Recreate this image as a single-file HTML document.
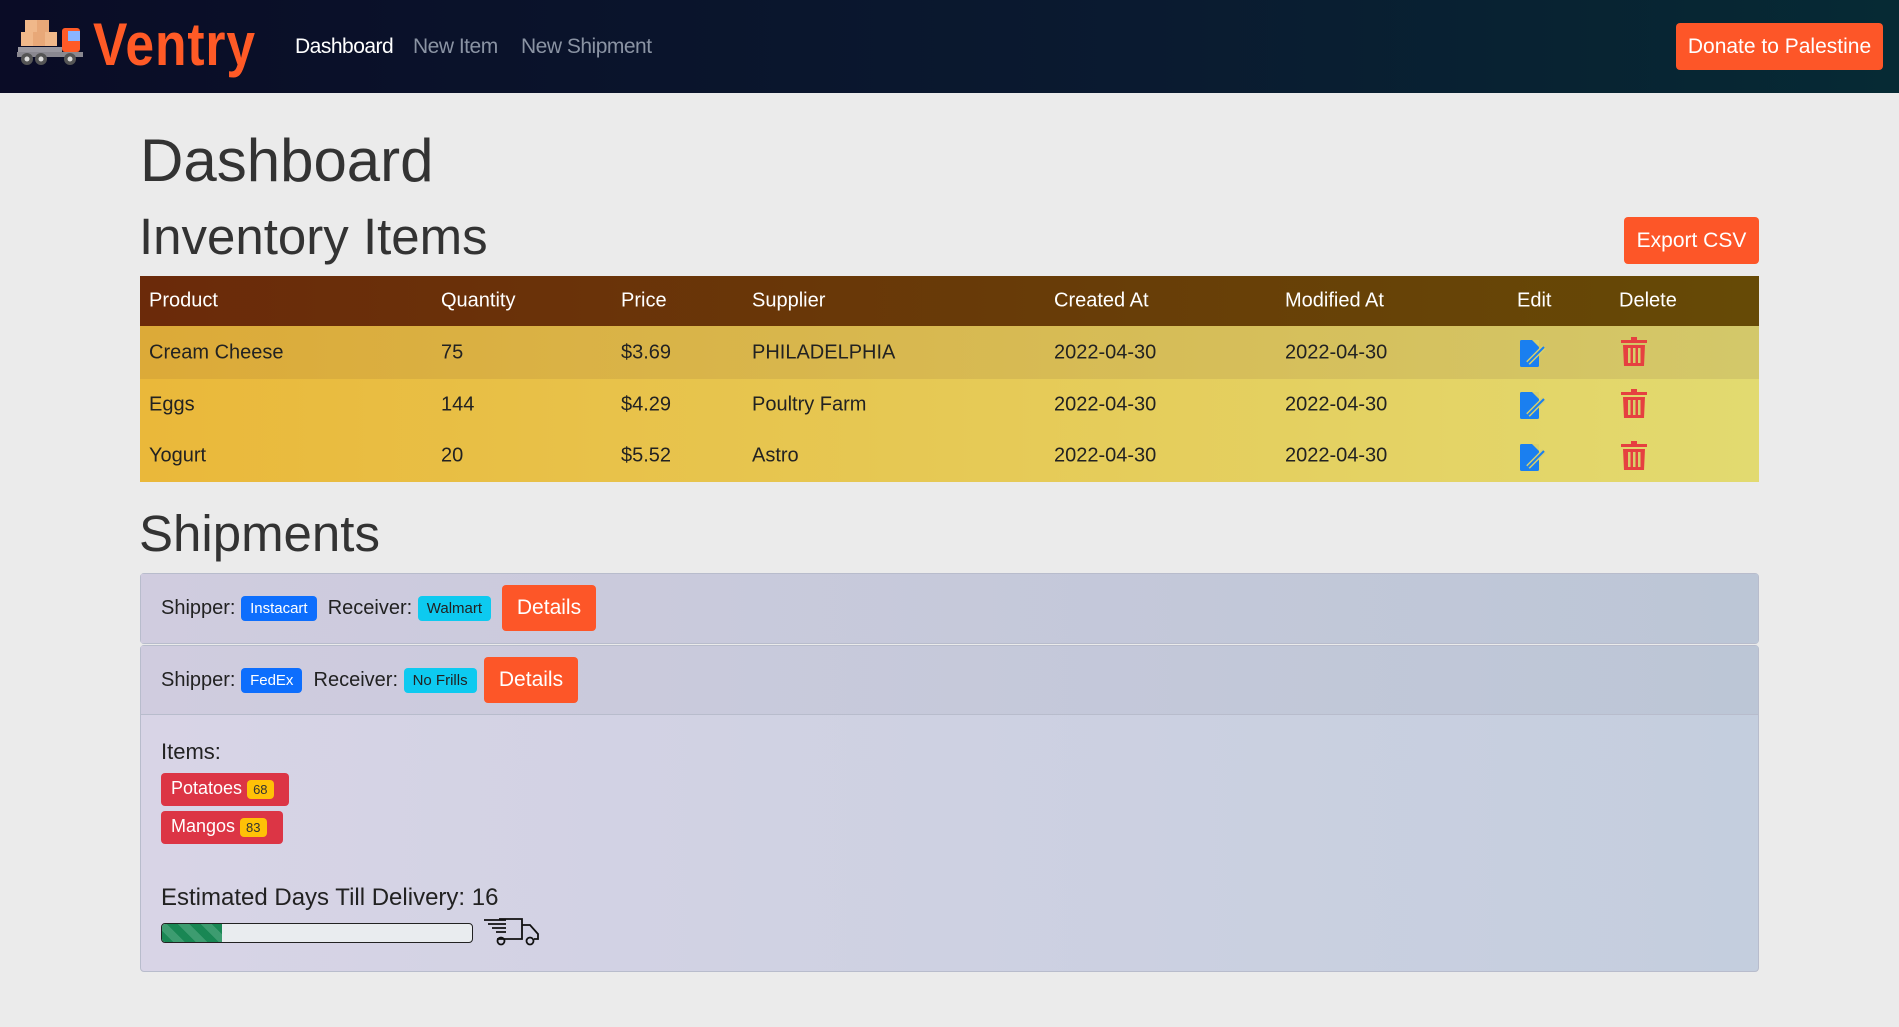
<!DOCTYPE html>
<html><head><meta charset="utf-8"><style>
*{box-sizing:border-box;margin:0;padding:0}
body{width:1899px;height:1027px;background:#ebebeb;font-family:"Liberation Sans",sans-serif;color:#222;position:relative;overflow:hidden}
.nav{position:absolute;left:0;top:0;width:1899px;height:93px;background:linear-gradient(90deg,#0a0c26,#0a1a30 60%,#062a34)}
.nav a{position:absolute;top:35px;font-size:21px;color:#8a93a3;letter-spacing:-0.5px}
.btn{position:absolute;background:#fd5628;color:#fff;border-radius:4px;font-size:21px;display:flex;align-items:center;justify-content:center}
.abs{position:absolute}
h1,h2{font-weight:300;position:absolute;color:#333}
.table{position:absolute;left:140px;top:276px;width:1619px}
.row{height:52px;position:relative;font-size:20px}
.row span{position:absolute;top:50%;transform:translateY(-50%)}
.hdr{height:50px;background:linear-gradient(90deg,#6b2a0a,#664a06);color:#fff}
.r1{background:linear-gradient(90deg,#dcaa38,#d3c86a)}
.r2,.r3{background:linear-gradient(90deg,#eab83a,#e2da70)}
.card{position:absolute;left:140px;width:1619px;border:1px solid #b8bccc;border-radius:4px;background:linear-gradient(90deg,#d8d4e6,#c4cede)}
.ch{height:69px;position:relative;font-size:20px;background:linear-gradient(90deg,#d0ccdf,#bcc6d6)}
.badge{display:inline-block;color:#fff;font-size:15px;padding:4px 9px;border-radius:4px;vertical-align:middle}
</style></head><body>
<div class="nav">
 <svg class="abs" style="left:15px;top:18px" width="78" height="52" viewBox="0 0 78 52">
  <rect x="10" y="2" width="12" height="12" fill="#f0b88a"/><rect x="22" y="2" width="12" height="12" fill="#e8a878"/>
  <rect x="6" y="14" width="12" height="14" fill="#f0b88a"/><rect x="18" y="14" width="12" height="14" fill="#e8a878"/><rect x="30" y="14" width="12" height="14" fill="#f0b88a"/>
  <rect x="3" y="29" width="44" height="6" fill="#9a98a0"/><rect x="47" y="10" width="18" height="24" rx="3" fill="#ff5a26"/><rect x="53" y="13" width="12" height="10" fill="#8ab4ff"/>
  <rect x="2" y="34" width="66" height="5" fill="#8a8890"/>
  <circle cx="12" cy="41" r="6" fill="#555"/><circle cx="26" cy="41" r="6" fill="#555"/><circle cx="55" cy="41" r="6" fill="#555"/>
  <circle cx="12" cy="41" r="2.5" fill="#ddd"/><circle cx="26" cy="41" r="2.5" fill="#ddd"/><circle cx="55" cy="41" r="2.5" fill="#ddd"/>
 </svg>
 <div class="abs" style="left:93px;top:10px;font-size:60px;font-weight:bold;color:#ff5a26;transform:scaleX(0.86);transform-origin:left top;letter-spacing:1px">Ventry</div>
 <a style="left:295px;color:#fff">Dashboard</a><a style="left:413px">New Item</a><a style="left:521px">New Shipment</a>
 <div class="btn" style="left:1676px;top:23px;width:207px;height:47px">Donate to Palestine</div>
</div>
<h1 style="left:140px;top:126px;font-size:60px">Dashboard</h1>
<h2 style="left:139px;top:207px;font-size:51px">Inventory Items</h2>
<div class="btn" style="left:1624px;top:217px;width:135px;height:47px">Export CSV</div>
<div class="table">
 <div class="row hdr"><span style="left:9px">Product</span><span style="left:301px">Quantity</span><span style="left:481px">Price</span><span style="left:612px">Supplier</span><span style="left:914px">Created At</span><span style="left:1145px">Modified At</span><span style="left:1377px">Edit</span><span style="left:1479px">Delete</span></div>
 <div class="row r1" style="height:53px"><span style="left:9px">Cream Cheese</span><span style="left:301px">75</span><span style="left:481px">$3.69</span><span style="left:612px">PHILADELPHIA</span><span style="left:914px">2022-04-30</span><span style="left:1145px">2022-04-30</span></div>
 <div class="row r2" style="height:51px"><span style="left:9px">Eggs</span><span style="left:301px">144</span><span style="left:481px">$4.29</span><span style="left:612px">Poultry Farm</span><span style="left:914px">2022-04-30</span><span style="left:1145px">2022-04-30</span></div>
 <div class="row r3"><span style="left:9px">Yogurt</span><span style="left:301px">20</span><span style="left:481px">$5.52</span><span style="left:612px">Astro</span><span style="left:914px">2022-04-30</span><span style="left:1145px">2022-04-30</span></div>
</div>
<svg class="abs" style="left:1519px;top:338px" width="30" height="150">
 <g id="e"><rect x="1" y="2" width="19" height="27" rx="1.5" fill="#1a7ff0"/><path d="M13 2 L20 9 L20 2Z" fill="#d8cf6a"/><path d="M9 25 L25 9" stroke="#d8cf6a" stroke-width="5"/><path d="M9 25 L25 9" stroke="#1a7ff0" stroke-width="2"/></g>
 <use href="#e" y="52"/><use href="#e" y="104"/>
</svg>
<svg class="abs" style="left:1620px;top:336px" width="30" height="150">
 <g id="t" fill="#e64040"><rect x="11" y="1" width="6" height="3"/><rect x="1" y="4" width="26" height="3"/><path d="M3 9h22l-1 21H4z"/><rect x="8" y="12" width="2.5" height="15" fill="#d8cf6a"/><rect x="13" y="12" width="2.5" height="15" fill="#d8cf6a"/><rect x="18" y="12" width="2.5" height="15" fill="#d8cf6a"/></g>
 <use href="#t" y="52"/><use href="#t" y="104"/>
</svg>
<h2 style="left:139px;top:504px;font-size:51px">Shipments</h2>
<div class="card" style="top:573px;height:71px">
 <div class="ch" style="height:69px"><div class="abs" style="left:20px;top:22px">Shipper: <span class="badge" style="background:#0d6efd">Instacart</span>&nbsp; Receiver: <span class="badge" style="background:#0dcaf0;color:#222">Walmart</span></div>
 <div class="btn" style="left:361px;top:11px;width:94px;height:46px">Details</div></div>
</div>
<div class="card" style="top:645px;height:327px">
 <div class="ch" style="border-bottom:1px solid #b8bccc"><div class="abs" style="left:20px;top:22px">Shipper: <span class="badge" style="background:#0d6efd">FedEx</span>&nbsp; Receiver: <span class="badge" style="background:#0dcaf0;color:#222">No Frills</span></div>
 <div class="btn" style="left:343px;top:11px;width:94px;height:46px">Details</div></div>
 <div class="abs" style="left:20px;top:93px;font-size:22px">Items:</div>
 <div class="abs" style="left:20px;top:127px;background:#dc3545;color:#fff;font-size:18px;padding:5px 10px;border-radius:4px;width:128px;height:33px">Potatoes <span style="background:#ffc107;color:#333;font-size:13px;padding:2px 6px;border-radius:4px">68</span></div>
 <div class="abs" style="left:20px;top:165px;background:#dc3545;color:#fff;font-size:18px;padding:5px 10px;border-radius:4px;width:122px;height:33px">Mangos <span style="background:#ffc107;color:#333;font-size:13px;padding:2px 6px;border-radius:4px">83</span></div>
 <div class="abs" style="left:20px;top:238px;font-size:24px">Estimated Days Till Delivery: 16</div>
 <div class="abs" style="left:20px;top:277px;width:312px;height:20px;border:1px solid #222;border-radius:4px;background:#e9ecef;overflow:hidden"><div style="width:60px;height:100%;background:repeating-linear-gradient(45deg,#198754 0 8px,#3d9c70 8px 16px)"></div></div>
 <svg class="abs" style="left:342px;top:271px" width="58" height="30" fill="none" stroke="#111" stroke-width="1.8"><path d="M1 3h22M5 7h18M9 11h14M13 15h10"/><path d="M16 2h23v20H16M39 8h8l8 9v5h-4M14 22h3M22 22h17"/><circle cx="18" cy="24" r="3.5"/><circle cx="47" cy="24" r="3.5"/></svg>
</div>
</body></html>
